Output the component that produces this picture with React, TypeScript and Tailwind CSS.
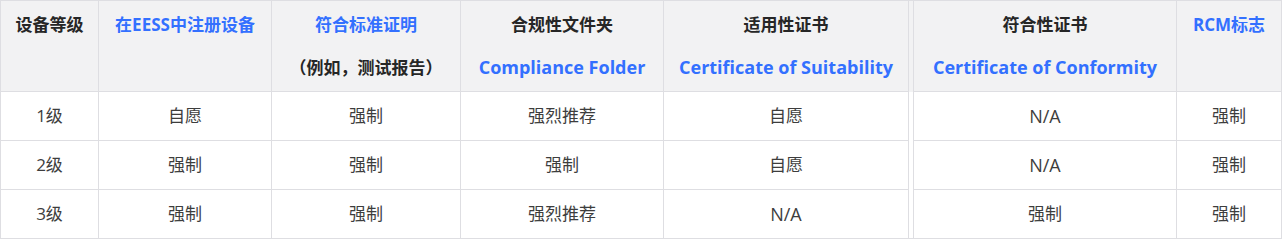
import React from 'react'

const COLS = [98, 173, 189, 203, 245, 5, 263, 105]

type Head = { top: string; topBlue?: boolean; sub?: string; subBlue?: boolean }

const HEADS: Head[] = [
  { top: '设备等级' },
  { top: '在EESS中注册设备', topBlue: true },
  { top: '符合标准证明', topBlue: true, sub: '（例如，测试报告）' },
  { top: '合规性文件夹', sub: 'Compliance Folder', subBlue: true },
  { top: '适用性证书', sub: 'Certificate of Suitability', subBlue: true },
  { top: '符合性证书', sub: 'Certificate of Conformity', subBlue: true },
  { top: 'RCM标志', topBlue: true },
]

const ROWS = [
  ['1级', '自愿', '强制', '强烈推荐', '自愿', 'N/A', '强制'],
  ['2级', '强制', '强制', '强制', '自愿', 'N/A', '强制'],
  ['3级', '强制', '强制', '强烈推荐', 'N/A', '强制', '强制'],
]

const font = "font-['Open_Sans','Noto_Sans_CJK_SC',sans-serif]"

export default function App() {
  return (
    <div className={`w-[1282px] h-[240px] bg-white ${font}`}>
      <table className="table-fixed border-collapse border border-[#dedee2] text-center">
        <colgroup>
          {COLS.map((w, i) => (
            <col key={i} style={{ width: w }} />
          ))}
        </colgroup>
        <thead>
          <tr className="bg-[#f2f2f3] h-[91px]">
            {HEADS.map((h, i) => (
              <React.Fragment key={i}>
                {i === 5 && <th className="border-x border-[#dedee2] p-0" />}
                <th className="border border-[#dedee2] align-top p-0 pt-[2px] text-[17px] font-bold leading-[43px] whitespace-nowrap">
                  <div className={h.topBlue ? 'text-[#3370ff]' : 'text-[#262626]'}>{h.top}</div>
                  {h.sub && (
                    <div className={h.subBlue ? 'text-[18px] text-[#3370ff]' : 'text-[#262626]'}>{h.sub}</div>
                  )}
                </th>
              </React.Fragment>
            ))}
          </tr>
        </thead>
        <tbody>
          {ROWS.map((r, ri) => (
            <tr key={ri} className="h-[49px]">
              {r.map((c, ci) => (
                <React.Fragment key={ci}>
                  {ci === 5 && <td className="border-x border-[#dedee2] p-0" />}
                  <td className="border border-[#dedee2] p-0 text-[17px] text-[#3d3d3d]">
                    {c === 'N/A' ? <span className="text-[18px]">N/A</span> : c}
                  </td>
                </React.Fragment>
              ))}
            </tr>
          ))}
        </tbody>
      </table>
    </div>
  )
}
